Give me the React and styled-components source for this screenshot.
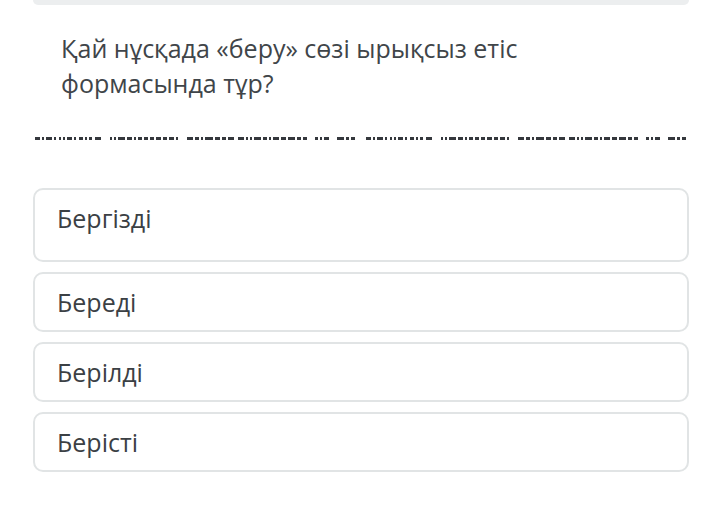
import React from "react";
import styled, { createGlobalStyle } from "styled-components";

const GlobalStyle = createGlobalStyle`
  body {
    margin: 0;
    background: #ffffff;
    font-family: "Open Sans", "Noto Sans", sans-serif;
  }
`;

// one period of the broken dashed rule, [start, width] in px
const dashPeriod = [
  [0, 5], [7, 2], [11, 6], [19, 2], [24, 2], [28, 2], [32, 5], [39, 2], [44, 4], [50, 2], [54, 3], [60, 6],
  [75, 2], [79, 2], [83, 7], [92, 5], [99, 2], [103, 4], [109, 4], [115, 4], [121, 5], [128, 4], [134, 5], [141, 2],
  [152, 6], [160, 4], [166, 2], [170, 8], [180, 5], [187, 4], [193, 6], [203, 6], [211, 2], [215, 2], [219, 7],
  [228, 4], [234, 2], [238, 6], [246, 5], [253, 7], [262, 4], [268, 4],
  [280, 3], [285, 2], [289, 5],
  [302, 7], [311, 3], [316, 4],
];

const options = [
  { text: "Бергізді", tall: true },
  { text: "Береді" },
  { text: "Берілді" },
  { text: "Берісті" },
];

const App = () => {
  return (
    <Page>
      <GlobalStyle />
      <PrevCard />
      <Question>Қай нұсқада «беру» сөзі ырықсыз етіс формасында тұр?</Question>
      <Rule>
        <svg width="656" height="3" viewBox="0 0 656 3">
          {[0, 331].map((off) =>
            dashPeriod.map(([x, w], i) => (
              <rect key={off + "-" + i} x={2 + off + x} y="0" width={w} height="3" fill="#35383d" />
            ))
          )}
        </svg>
      </Rule>
      <Options>
        {options.map((o) => (
          <Option key={o.text} $tall={o.tall}>
            {o.text}
          </Option>
        ))}
      </Options>
    </Page>
  );
};

export default App;

const Page = styled.div`
  width: 720px;
  height: 521px;
  box-sizing: border-box;
  padding: 0 31px 0 33px;
  display: flex;
  flex-direction: column;
  overflow: hidden;
`;

const PrevCard = styled.div`
  height: 5px;
  background: #eceeef;
  border-radius: 0 0 10px 10px;
`;

const Question = styled.div`
  margin: 26px 130px 0 28px;
  font-size: 25px;
  line-height: 35px;
  color: #404549;
`;

const Rule = styled.div`
  margin-top: 33px;
  height: 3px;
  line-height: 0;
`;

const Options = styled.div`
  margin-top: 51px;
  display: flex;
  flex-direction: column;
  gap: 10px;
`;

const Option = styled.div`
  box-sizing: border-box;
  flex: none;
  height: ${(p) => (p.$tall ? "74px" : "60px")};
  padding: 11px 22px;
  border: 2px solid #e1e4e5;
  border-radius: 10px;
  background: #ffffff;
  font-size: 25px;
  line-height: 34px;
  color: #3b4044;
`;
